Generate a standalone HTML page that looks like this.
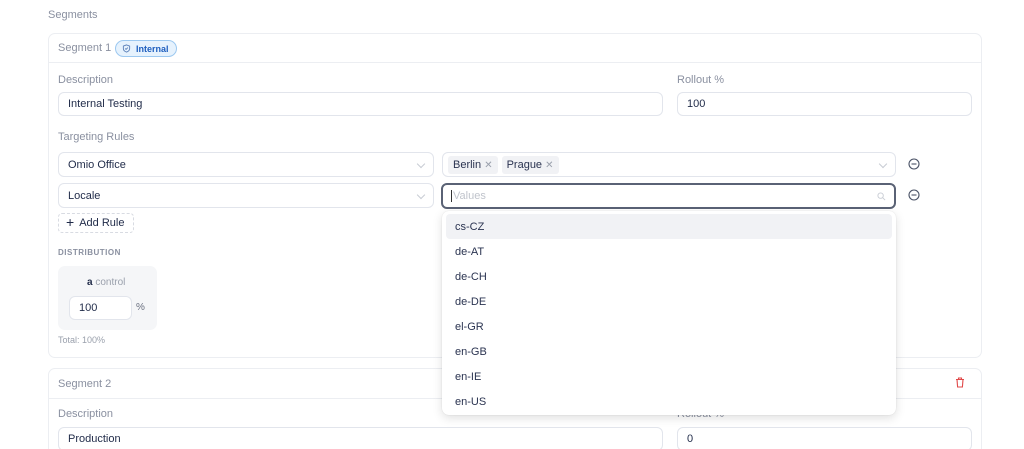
<!DOCTYPE html>
<html><head><meta charset="utf-8"><style>
*{box-sizing:border-box;margin:0;padding:0}
html,body{width:1024px;height:449px;overflow:hidden}
body{background:#fff;font-family:"Liberation Sans",sans-serif;color:#2a3350;position:relative}
.a{position:absolute}
.lbl{font-size:11px;color:#8a90a0}
.inp{position:absolute;border:1px solid #e2e5ec;border-radius:6px;background:#fff;font-size:11px;color:#1f2a48;padding-left:9px;display:flex;align-items:center}
.card{position:absolute;border:1px solid #eceef2;border-radius:7px}
.chev{position:absolute;right:9px;top:8px;width:6px;height:6px;border-right:1px solid #c8ccd4;border-bottom:1px solid #c8ccd4;transform:rotate(45deg)}
.tag{background:#f1f2f5;border-radius:3px;padding:3px 5px;font-size:11px;margin-right:4px;color:#2a3350}
.tag span{color:#9aa0ac;font-size:10px}
.item{position:absolute;left:4px;right:4px;height:25px;font-size:11px;color:#2a3350;padding-left:9px;display:flex;align-items:center;border-radius:4px}
</style></head><body>
<div class="a lbl" style="left:48px;top:9px">Segments</div>

<div class="card" style="left:48px;top:33px;width:934px;height:325px">
 <div class="a" style="left:0;right:0;top:28px;border-top:1px solid #eceef2"></div>
 <div class="a lbl" style="left:9px;top:8px">Segment 1</div>
 <div class="a" style="left:66px;top:6px;height:17px;width:62px;border:1px solid #9cc8f0;background:#e6f2fd;border-radius:9px;font-size:9px;font-weight:bold;color:#1f5fbf;display:flex;align-items:center;padding-left:6px">
  <svg width="9" height="9" viewBox="0 0 10 10" style="margin-right:5px"><path d="M5 1L8.5 2.3V5c0 2-1.6 3.3-3.5 4C3.1 8.3 1.5 7 1.5 5V2.3z" fill="none" stroke="#5a7fb8" stroke-width="1"/><path d="M3.5 5l1 1 2-2" fill="none" stroke="#5a7fb8" stroke-width="1"/></svg>Internal</div>
</div>
<div class="a lbl" style="left:58px;top:74px">Description</div>
<div class="inp" style="left:58px;top:92px;width:605px;height:24px">Internal Testing</div>
<div class="a lbl" style="left:677px;top:74px">Rollout %</div>
<div class="inp" style="left:677px;top:92px;width:295px;height:24px">100</div>
<div class="a lbl" style="left:58px;top:131px">Targeting Rules</div>
<div class="inp" style="left:58px;top:152px;width:376px;height:25px">Omio Office<div class="chev"></div></div>
<div class="inp" style="left:442px;top:152px;width:454px;height:25px;padding-left:5px"><span class="tag">Berlin <span>✕</span></span><span class="tag">Prague <span>✕</span></span><div class="chev"></div></div>
<svg class="a" style="left:908px;top:158px" width="12" height="12" viewBox="0 0 12 12"><circle cx="6" cy="6" r="5" fill="none" stroke="#4a5266" stroke-width="1.1"/><path d="M3.5 6h5" stroke="#4a5266" stroke-width="1.1"/></svg>
<div class="inp" style="left:58px;top:183px;width:376px;height:25px">Locale<div class="chev"></div></div>
<div class="inp" style="left:441px;top:183px;width:455px;height:26px;border:2px solid #5a6275;color:#c0c4cc"><span style="border-left:1px solid #333;padding-left:1px;margin-left:-1px">Values</span>
 <svg style="position:absolute;right:8px;top:7px" width="9" height="9" viewBox="0 0 10 10"><circle cx="4" cy="4" r="3" fill="none" stroke="#c8ccd4"/><path d="M6.3 6.3L9 9" stroke="#c8ccd4"/></svg></div>
<svg class="a" style="left:908px;top:189px" width="12" height="12" viewBox="0 0 12 12"><circle cx="6" cy="6" r="5" fill="none" stroke="#4a5266" stroke-width="1.1"/><path d="M3.5 6h5" stroke="#4a5266" stroke-width="1.1"/></svg>
<div class="a" style="left:58px;top:213px;width:76px;height:20px;border:1px dashed #d8dbe2;border-radius:4px;font-size:11px;display:flex;align-items:center;padding-left:7px;color:#1f2a48"><span style="font-size:14px;margin-right:5px;margin-top:-2px">+</span>Add Rule</div>
<div class="a" style="left:58px;top:248px;font-size:8px;font-weight:bold;color:#8a90a0;letter-spacing:.5px">DISTRIBUTION</div>
<div class="a" style="left:58px;top:266px;width:99px;height:64px;background:#f5f6f8;border-radius:7px"></div>
<div class="a" style="left:87px;top:277px;font-size:10px;color:#9aa0ac"><b style="color:#1f2a48">a</b> control</div>
<div class="inp" style="left:69px;top:296px;width:63px;height:24px">100</div>
<div class="a" style="left:136px;top:302px;font-size:10px;color:#6a7080">%</div>
<div class="a" style="left:58px;top:335px;font-size:9px;color:#9aa0ac">Total: 100%</div>

<div class="card" style="left:48px;top:368px;width:934px;height:100px">
 <div class="a" style="left:0;right:0;top:29px;border-top:1px solid #eceef2"></div>
 <div class="a lbl" style="left:9px;top:9px">Segment 2</div>
</div>
<svg class="a" style="left:955px;top:377px" width="10" height="11" viewBox="0 0 10 11"><path d="M1 2.5h8M3.5 2.5V1h3v1.5M2 2.5l.6 7.5h4.8L8 2.5" fill="none" stroke="#e04848" stroke-width="1.1"/></svg>
<div class="a lbl" style="left:58px;top:408px">Description</div>
<div class="inp" style="left:58px;top:427px;width:605px;height:24px">Production</div>
<div class="a lbl" style="left:677px;top:408px">Rollout %</div>
<div class="inp" style="left:677px;top:427px;width:295px;height:24px">0</div>

<div class="a" style="left:442px;top:211px;width:454px;height:204px;background:#fff;border-radius:7px;box-shadow:0 3px 10px rgba(0,0,0,.13),0 0 1px rgba(0,0,0,.15)">
 <div class="item" style="top:3px;background:#f1f2f5">cs-CZ</div>
 <div class="item" style="top:28px">de-AT</div>
 <div class="item" style="top:53px">de-CH</div>
 <div class="item" style="top:78px">de-DE</div>
 <div class="item" style="top:103px">el-GR</div>
 <div class="item" style="top:128px">en-GB</div>
 <div class="item" style="top:153px">en-IE</div>
 <div class="item" style="top:178px">en-US</div>
</div>
</body></html>
